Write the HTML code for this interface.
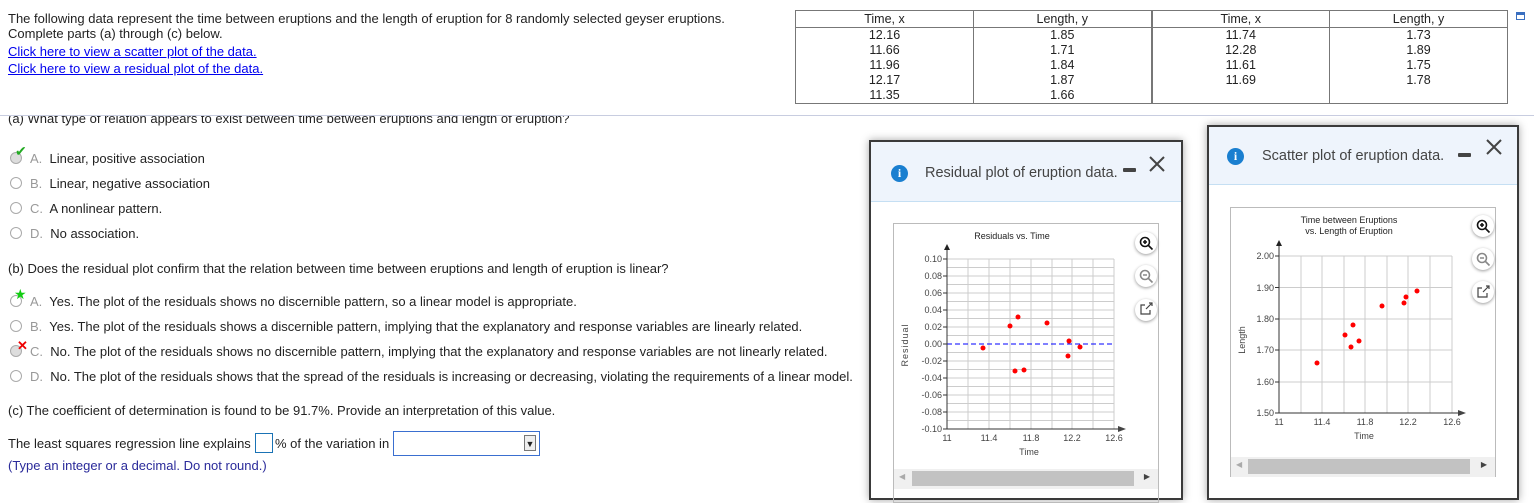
<!DOCTYPE html>
<html><head><meta charset="utf-8"><style>
*{margin:0;padding:0;box-sizing:border-box}
body{width:1534px;height:487px;overflow:hidden;background:#fff;font-family:"Liberation Sans",Arial,sans-serif;font-size:13px;color:#222;position:relative}
.t{position:absolute;white-space:nowrap;line-height:15px}
a{color:#00e;text-decoration:underline}
.rad{position:absolute;width:12px;height:12px;border:1px solid #aaa;border-radius:50%;background:#fff}
.lt{color:#999}
table{position:absolute;left:795px;top:10px;width:713px;border-collapse:collapse;border:1px solid #777;font-size:12.5px;table-layout:fixed}
td,th{text-align:center;font-weight:normal;border-left:1px solid #777;line-height:15px;padding:0}
th{border-bottom:1px solid #777;height:17px}
.win{position:absolute;background:#fff;border:2px solid #3a3a3a;box-shadow:0 0 8px rgba(0,0,0,.35)}
.hdr{background:#eef4fc;border-bottom:1px solid #c5dff3;position:relative}
.info{position:absolute;width:17px;height:17px;border-radius:50%;background:#1a7fd0;color:#fff;font:bold 12px "Liberation Serif",serif;text-align:center;line-height:17px}
.btn{position:absolute;width:22px;height:22px;border-radius:50%;background:#fff;box-shadow:0 1px 3px rgba(0,0,0,.4)}
</style></head><body>
<div class="t" style="left:8px;top:11px">The following data represent the time between eruptions and the length of eruption for 8 randomly selected geyser eruptions.</div>
<div class="t" style="left:8px;top:26px">Complete parts (a) through (c) below.</div>
<div class="t" style="left:8px;top:44px"><a>Click here to view a scatter plot of the data.</a></div>
<div class="t" style="left:8px;top:61px"><a>Click here to view a residual plot of the data.</a></div>
<table>
<tr><th>Time, x</th><th>Length, y</th><th style="border-left:2px solid #777">Time, x</th><th>Length, y</th></tr>
<tr><td>12.16<br>11.66<br>11.96<br>12.17<br>11.35</td><td>1.85<br>1.71<br>1.84<br>1.87<br>1.66</td><td style="border-left:2px solid #777;vertical-align:top">11.74<br>12.28<br>11.61<br>11.69</td><td style="vertical-align:top">1.73<br>1.89<br>1.75<br>1.78</td></tr>
</table>
<div style="position:absolute;left:1516px;top:12px;width:9px;height:8px;border:1px solid #3a6fc0;border-top:3px solid #3a6fc0"></div>
<div class="t" style="left:8px;top:111px">(a) What type of relation appears to exist between time between eruptions and length of eruption?</div>
<div style="position:absolute;left:0;top:100px;width:780px;height:16px;background:#fff"></div>
<div style="position:absolute;left:0;top:115px;width:1534px;height:1px;background:#c8cde0"></div>

<div class="rad" style="left:10px;top:152px;background:#ddd"></div><div class="t" style="left:15px;top:144px;color:#2a2;font-size:14px">✔</div>
<div class="t" style="left:30px;top:151px"><span class="lt">A.</span>&nbsp; Linear, positive association</div>
<div class="rad" style="left:10px;top:177px"></div><div class="t" style="left:30px;top:176px"><span class="lt">B.</span>&nbsp; Linear, negative association</div>
<div class="rad" style="left:10px;top:202px"></div><div class="t" style="left:30px;top:201px"><span class="lt">C.</span>&nbsp; A nonlinear pattern.</div>
<div class="rad" style="left:10px;top:227px"></div><div class="t" style="left:30px;top:226px"><span class="lt">D.</span>&nbsp; No association.</div>

<div class="t" style="left:8px;top:261px">(b) Does the residual plot confirm that the relation between time between eruptions and length of eruption is linear?</div>
<div class="rad" style="left:10px;top:295px"></div><div class="t" style="left:14px;top:287px;color:#1c1;font-size:14px">★</div>
<div class="t" style="left:30px;top:294px"><span class="lt">A.</span>&nbsp; Yes. The plot of the residuals shows no discernible pattern, so a linear model is appropriate.</div>
<div class="rad" style="left:10px;top:320px"></div><div class="t" style="left:30px;top:319px"><span class="lt">B.</span>&nbsp; Yes. The plot of the residuals shows a discernible pattern, implying that the explanatory and response variables are linearly related.</div>
<div class="rad" style="left:10px;top:345px;background:#ddd"></div><div class="t" style="left:17px;top:338px;color:#e00;font-weight:bold;font-size:13px">✕</div>
<div class="t" style="left:30px;top:344px"><span class="lt">C.</span>&nbsp; No. The plot of the residuals shows no discernible pattern, implying that the explanatory and response variables are not linearly related.</div>
<div class="rad" style="left:10px;top:370px"></div><div class="t" style="left:30px;top:369px"><span class="lt">D.</span>&nbsp; No. The plot of the residuals shows that the spread of the residuals is increasing or decreasing, violating the requirements of a linear model.</div>

<div class="t" style="left:8px;top:403px">(c) The coefficient of determination is found to be 91.7%. Provide an interpretation of this value.</div>
<div class="t" style="left:8px;top:436px">The least squares regression line explains</div>
<div style="position:absolute;left:255px;top:433px;width:18px;height:20px;border:1px solid #1a73b5"></div>
<div class="t" style="left:275px;top:436px">% of the variation in</div>
<div style="position:absolute;left:393px;top:431px;width:147px;height:25px;border:1px solid #3a6fd0"><div style="position:absolute;right:3px;top:3px;width:12px;height:16px;border:1px solid #777;background:#eee;font-size:9px;text-align:center;line-height:16px">▼</div></div>
<div class="t" style="left:8px;top:458px;color:#2a2a9a">(Type an integer or a decimal. Do not round.)</div>

<!-- residual window -->
<div class="win" style="left:869px;top:140px;width:314px;height:360px">
 <div class="hdr" style="height:60px">
  <div class="info" style="left:20px;top:23px">i</div>
  <div class="t" style="left:54px;top:24px;font-size:14.5px;color:#444">Residual plot of eruption data.</div>
  <div style="position:absolute;left:252px;top:26px;width:13px;height:4px;background:#444;border-radius:1px"></div>
 </div>
 <div style="position:absolute;left:22px;top:81px;width:266px;height:280px;border:1px solid #bbb"></div>
 <div style="position:absolute;left:23px;top:327px;width:264px;height:20px;background:#f0f0f0"><div style="position:absolute;left:18px;top:2px;width:222px;height:15px;background:#c2c2c2"></div><div style="position:absolute;left:5px;top:3px;font-size:8px;color:#aaa">◀</div><div style="position:absolute;right:8px;top:3px;font-size:8px;color:#444">▶</div></div>
</div>
<div class="btn" style="left:1135px;top:232px"></div>
<div class="btn" style="left:1135px;top:265px"></div>
<div class="btn" style="left:1135px;top:299px"></div>

<!-- scatter window -->
<div class="win" style="left:1207px;top:125px;width:312px;height:375px">
 <div class="hdr" style="height:58px">
  <div class="info" style="left:18px;top:21px">i</div>
  <div class="t" style="left:53px;top:22px;font-size:14.5px;color:#444">Scatter plot of eruption data.</div>
  <div style="position:absolute;left:249px;top:26px;width:13px;height:4px;background:#444;border-radius:1px"></div>
 </div>
 <div style="position:absolute;left:21px;top:80px;width:266px;height:270px;border:1px solid #bbb"></div>
 <div style="position:absolute;left:22px;top:330px;width:264px;height:20px;background:#f0f0f0"><div style="position:absolute;left:17px;top:2px;width:222px;height:15px;background:#c2c2c2"></div><div style="position:absolute;left:5px;top:3px;font-size:8px;color:#aaa">◀</div><div style="position:absolute;right:8px;top:3px;font-size:8px;color:#444">▶</div></div>
</div>
<div class="btn" style="left:1472px;top:215px"></div>
<div class="btn" style="left:1472px;top:248px"></div>
<div class="btn" style="left:1472px;top:281px"></div>

<svg width="1534" height="487" style="position:absolute;left:0;top:0" font-family="Liberation Sans, Arial, sans-serif">
 <g stroke="#444" stroke-width="2" fill="none"><path d="M1150 157l14 14M1164 157l-14 14"/><path d="M1487 140l14 14M1501 140l-14 14"/></g>
 <g stroke="#ccc" stroke-width="1" fill="none">
  <path d="M968 259V429M989 259V429M1010 259V429M1031 259V429M1052 259V429M1072 259V429M1093 259V429M1114 259V429"/>
  <path d="M947 259H1114M947 267.5H1114M947 276H1114M947 284.5H1114M947 293H1114M947 301.5H1114M947 310H1114M947 318.5H1114M947 327H1114M947 335.5H1114M947 352.5H1114M947 361H1114M947 369.5H1114M947 378H1114M947 386.5H1114M947 395H1114M947 403.5H1114M947 412H1114M947 420.5H1114"/>
 </g>
 <path d="M947 344H1114" stroke="#00f" stroke-dasharray="5,3" fill="none"/>
 <g stroke="#333" fill="none"><path d="M947 248V429H1120"/><path d="M943 259H947M943 276H947M943 293H947M943 310H947M943 327H947M943 344H947M943 361H947M943 378H947M943 395H947M943 412H947M943 429H947"/></g>
 <path d="M947 244l-3 6h6z" fill="#222"/><path d="M1126 429l-8-3v6z" fill="#444"/>
 <g font-size="9" fill="#444" text-anchor="end"><text x="942" y="262">0.10</text><text x="942" y="279">0.08</text><text x="942" y="296">0.06</text><text x="942" y="313">0.04</text><text x="942" y="330">0.02</text><text x="942" y="347">0.00</text><text x="942" y="364">-0.02</text><text x="942" y="381">-0.04</text><text x="942" y="398">-0.06</text><text x="942" y="415">-0.08</text><text x="942" y="432">-0.10</text></g>
 <g font-size="9" fill="#444" text-anchor="middle"><text x="947" y="441">11</text><text x="989" y="441">11.4</text><text x="1031" y="441">11.8</text><text x="1072" y="441">12.2</text><text x="1114" y="441">12.6</text><text x="1029" y="455">Time</text><text x="1012" y="239" fill="#222">Residuals vs. Time</text></g>
 <text transform="translate(908,345) rotate(-90)" font-size="9" fill="#444" text-anchor="middle" letter-spacing="1">Residual</text>
 <g fill="#f00"><circle cx="983" cy="348" r="2.5"/><circle cx="1010" cy="326" r="2.5"/><circle cx="1018" cy="317" r="2.5"/><circle cx="1047" cy="323" r="2.5"/><circle cx="1069" cy="341" r="2.5"/><circle cx="1068" cy="356" r="2.5"/><circle cx="1080" cy="347" r="2.5"/><circle cx="1015" cy="371" r="2.5"/><circle cx="1024" cy="370" r="2.5"/></g>

 <g stroke="#ccc" fill="none"><path d="M1301 256V413M1322 256V413M1344 256V413M1365 256V413M1387 256V413M1408 256V413M1430 256V413M1452 256V413"/><path d="M1279 256H1452M1279 287.5H1452M1279 319H1452M1279 350H1452M1279 382H1452"/></g>
 <g stroke="#333" fill="none"><path d="M1279 244V413H1458"/><path d="M1275 256H1279M1275 287.5H1279M1275 319H1279M1275 350H1279M1275 382H1279M1275 413H1279"/></g>
 <path d="M1279 240l-3 6h6z" fill="#222"/><path d="M1466 413l-8-3v6z" fill="#444"/>
 <g font-size="9" fill="#444" text-anchor="end"><text x="1274" y="259">2.00</text><text x="1274" y="291">1.90</text><text x="1274" y="322">1.80</text><text x="1274" y="353">1.70</text><text x="1274" y="385">1.60</text><text x="1274" y="416">1.50</text></g>
 <g font-size="9" fill="#444" text-anchor="middle"><text x="1279" y="425">11</text><text x="1322" y="425">11.4</text><text x="1365" y="425">11.8</text><text x="1408" y="425">12.2</text><text x="1452" y="425">12.6</text><text x="1364" y="439">Time</text><text x="1349" y="223" fill="#222">Time between Eruptions</text><text x="1349" y="234" fill="#222">vs. Length of Eruption</text></g>
 <text transform="translate(1245,340) rotate(-90)" font-size="9" fill="#444" text-anchor="middle">Length</text>
 <g fill="#f00"><circle cx="1317" cy="363" r="2.5"/><circle cx="1345" cy="335" r="2.5"/><circle cx="1351" cy="347" r="2.5"/><circle cx="1353" cy="325" r="2.5"/><circle cx="1359" cy="341" r="2.5"/><circle cx="1382" cy="306" r="2.5"/><circle cx="1404" cy="303" r="2.5"/><circle cx="1406" cy="297" r="2.5"/><circle cx="1417" cy="291" r="2.5"/></g>

 <g fill="none" stroke-width="1.6">
  <g stroke="#111"><circle cx="1145" cy="242" r="4.5"/><path d="M1148.5 245.5l4 4M1143 242h4M1145 240v4"/></g>
  <g stroke="#888"><circle cx="1145" cy="275" r="4.5"/><path d="M1148.5 278.5l4 4M1143 275h4"/></g>
  <g stroke="#444" stroke-width="1.2"><path d="M1145 305h-4v9h9v-4M1146 309l6-6M1149 303h3v3"/></g>
  <g stroke="#111"><circle cx="1482" cy="225" r="4.5"/><path d="M1485.5 228.5l4 4M1480 225h4M1482 223v4"/></g>
  <g stroke="#888"><circle cx="1482" cy="258" r="4.5"/><path d="M1485.5 261.5l4 4M1480 258h4"/></g>
  <g stroke="#444" stroke-width="1.2"><path d="M1482 288h-4v9h9v-4M1483 292l6-6M1486 286h3v3"/></g>
 </g>
</svg>
</body></html>
